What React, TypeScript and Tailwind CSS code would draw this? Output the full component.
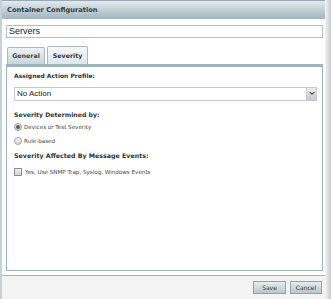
import React from 'react';

const font = { fontFamily: 'Tahoma, "DejaVu Sans", "Liberation Sans", sans-serif' };

const App: React.FC = () => {
  return (
    <div className="w-[331px] h-[299px] flex bg-white overflow-hidden" style={font}>
      {/* left edge */}
      <div className="w-[2px] bg-[#c4d2d8]" />

      <div className="flex-1 flex flex-col">
        {/* title bar */}
        <div className="h-[19px] border-t border-[#97a9b2] bg-gradient-to-b from-[#e3eaee] to-[#a2b4bd] flex items-center pl-[5px]">
          <span className="text-[6.7px] font-bold text-[#333d42]">Container Configuration</span>
        </div>

        <div className="flex-1 flex flex-col pl-[4px] pr-[2px]">
          {/* name field */}
          <div className="mt-[6px] h-[13px] border border-[#b9bdca] bg-white flex items-center pl-[2px]">
            <span className="text-[9px] text-[#222]" style={{ fontFamily: '"Liberation Sans", sans-serif' }}>Servers</span>
          </div>

          {/* tabs */}
          <div className="mt-[8px] h-[18px] flex items-end gap-[2px] pl-[1px]">
            <div className="h-[17px] w-[38px] border border-b-0 border-[#a7b8c0] rounded-t-[2px] bg-gradient-to-b from-[#eef2f4] to-[#c9d5db] flex items-center justify-center">
              <span className="text-[6.3px] font-bold text-[#3c474c]">General</span>
            </div>
            <div className="h-[18px] w-[41px] border border-b-0 border-[#a7b8c0] rounded-t-[2px] bg-gradient-to-b from-[#f6f8f9] to-[#dfe7eb] flex items-center justify-center">
              <span className="text-[6.3px] font-bold text-[#2e383d]">Severity</span>
            </div>
          </div>

          {/* panel */}
          <div className="h-[207px] border-t-[3px] border-x border-b border-[#9fb3bc] bg-white flex flex-col pl-[7px] pr-[5px]">
            <div className="mt-[4px] text-[6px] leading-[9px] font-bold text-[#333]">Assigned Action Profile:</div>
            <div className="mt-[7px] h-[14px] flex border border-[#c4c7d3]">
              <div className="flex-1 flex items-center pl-[2px]">
                <span className="text-[8px] text-[#222]" style={{ fontFamily: '"Liberation Sans", sans-serif' }}>No Action</span>
              </div>
              <div className="w-[10px] bg-gradient-to-b from-[#eeeeee] to-[#c9c9c9] border-l border-[#c4c7d3] flex items-center justify-center">
                <svg width="6" height="4" viewBox="0 0 6 4">
                  <path d="M0 0 L3 3 L6 0 L4.5 0 L3 1.5 L1.5 0 Z" fill="#444" />
                </svg>
              </div>
            </div>

            <div className="mt-[9px] text-[6.2px] leading-[9px] font-bold text-[#333]">Severity Determined by:</div>
            <div className="mt-[4px] flex flex-col gap-[6px]">
              <label className="flex items-center gap-[2px] h-[8px]">
                <span className="w-[8px] h-[8px] rounded-full border border-[#9a9a9a] bg-gradient-to-b from-[#f0f0f0] to-[#d4d4d4] flex items-center justify-center">
                  <span className="w-[4px] h-[4px] rounded-full bg-[#5a5a5a]" />
                </span>
                <span className="text-[5.6px] text-[#444]">Devices or Test Severity</span>
              </label>
              <label className="flex items-center gap-[2px] h-[8px]">
                <span className="w-[8px] h-[8px] rounded-full border border-[#a8a8a8] bg-gradient-to-b from-[#f4f4f4] to-[#d8d8d8]" />
                <span className="text-[5.6px] text-[#444]">Rule-based</span>
              </label>
            </div>

            <div className="mt-[6px] text-[6.3px] leading-[9px] font-bold text-[#333]">Severity Affected By Message Events:</div>
            <label className="mt-[8px] flex items-center gap-[3px] h-[8px]">
              <span className="w-[8px] h-[8px] border border-[#8e8e8e] bg-gradient-to-b from-[#f2f2f2] to-[#d2d2d2]" />
              <span className="text-[5.6px] text-[#444]">Yes, Use SNMP Trap, Syslog, Windows Events</span>
            </label>
          </div>
        </div>

        {/* footer */}
        <div className="mt-[4px] h-[24px] border-t border-[#9fb3bc] bg-[#f3f3f3] flex items-center justify-end gap-[4px] pr-[3px]">
          <button className="h-[13px] w-[33px] border border-[#93a3ad] bg-gradient-to-b from-[#e6ecef] to-[#b9c7ce] text-[6px] text-[#333]">Save</button>
          <button className="h-[13px] w-[32px] border border-[#93a3ad] bg-gradient-to-b from-[#e6ecef] to-[#b9c7ce] text-[6px] text-[#333]">Cancel</button>
        </div>
      </div>

      {/* right shadow */}
      <div className="w-[6px] bg-gradient-to-r from-[#f4f4f4] to-[#c4c8ca]" />
    </div>
  );
};

export default App;
